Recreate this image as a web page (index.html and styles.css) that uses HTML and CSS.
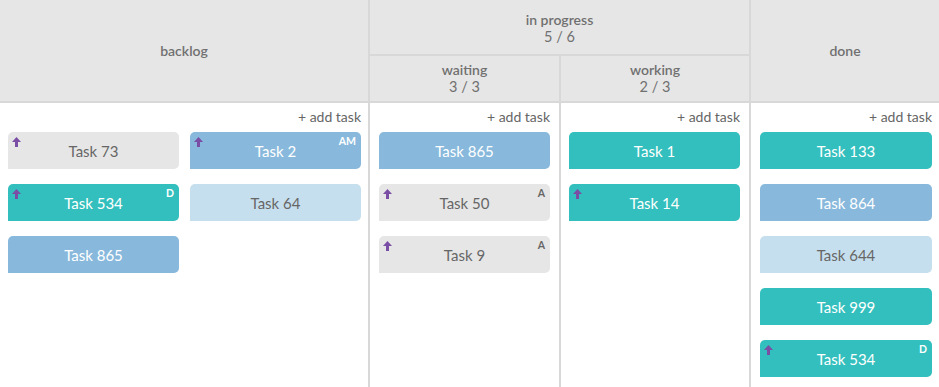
FILE: index.html
```html
<!DOCTYPE html>
<html lang="en">
<head>
  <meta charset="UTF-8">
  <title>Board</title>
  <link rel="stylesheet" href="styles.css">
</head>
<body>
  <div class="board">
    <!-- Header -->
    <div class="head head-backlog"><span class="title">backlog</span></div>
    <div class="head head-progress">
      <span class="title">in progress</span>
      <span class="count">5 / 6</span>
    </div>
    <div class="head head-waiting">
      <span class="title">waiting</span>
      <span class="count">3 / 3</span>
    </div>
    <div class="head head-working">
      <span class="title">working</span>
      <span class="count">2 / 3</span>
    </div>
    <div class="head head-done"><span class="title">done</span></div>

    <!-- Backlog -->
    <div class="col col-backlog">
      <div class="add">+ add task</div>
      <div class="cards two">
        <div class="card grey"><svg class="prio" viewBox="0 0 9 10"><path d="M4.5 0 L9 5 L6 5 L6 10 L3 10 L3 5 L0 5 Z"/></svg>Task 73</div>
        <div class="card blue"><svg class="prio" viewBox="0 0 9 10"><path d="M4.5 0 L9 5 L6 5 L6 10 L3 10 L3 5 L0 5 Z"/></svg>Task 2<span class="who">AM</span></div>
        <div class="card teal"><svg class="prio" viewBox="0 0 9 10"><path d="M4.5 0 L9 5 L6 5 L6 10 L3 10 L3 5 L0 5 Z"/></svg>Task 534<span class="who">D</span></div>
        <div class="card pale">Task 64</div>
        <div class="card blue">Task 865</div>
      </div>
    </div>

    <!-- Waiting -->
    <div class="col col-waiting">
      <div class="add">+ add task</div>
      <div class="cards">
        <div class="card blue">Task 865</div>
        <div class="card grey"><svg class="prio" viewBox="0 0 9 10"><path d="M4.5 0 L9 5 L6 5 L6 10 L3 10 L3 5 L0 5 Z"/></svg>Task 50<span class="who">A</span></div>
        <div class="card grey"><svg class="prio" viewBox="0 0 9 10"><path d="M4.5 0 L9 5 L6 5 L6 10 L3 10 L3 5 L0 5 Z"/></svg>Task 9<span class="who">A</span></div>
      </div>
    </div>

    <!-- Working -->
    <div class="col col-working">
      <div class="add">+ add task</div>
      <div class="cards">
        <div class="card teal">Task 1</div>
        <div class="card teal"><svg class="prio" viewBox="0 0 9 10"><path d="M4.5 0 L9 5 L6 5 L6 10 L3 10 L3 5 L0 5 Z"/></svg>Task 14</div>
      </div>
    </div>

    <!-- Done -->
    <div class="col col-done">
      <div class="add">+ add task</div>
      <div class="cards">
        <div class="card teal">Task 133</div>
        <div class="card blue">Task 864</div>
        <div class="card pale">Task 644</div>
        <div class="card teal">Task 999</div>
        <div class="card teal"><svg class="prio" viewBox="0 0 9 10"><path d="M4.5 0 L9 5 L6 5 L6 10 L3 10 L3 5 L0 5 Z"/></svg>Task 534<span class="who">D</span></div>
      </div>
    </div>
  </div>
</body>
</html>
```

FILE: styles.css
```css
/* General */
body {
  margin: 0;
  font-family: 'Lato', 'Open Sans', sans-serif;
  color: #666;
  background: #fff;
  overflow: hidden;
}

/* Board grid */
.board {
  display: grid;
  grid-template-columns: 370px 191px 190px 188px;
  grid-template-rows: 56px 47px 284px;
}

.head {
  background-color: #e6e6e6;
  display: flex;
  flex-direction: column;
  align-items: center;
  justify-content: center;
  box-sizing: border-box;
  border-bottom: 2px solid #d8d8d8;
  line-height: 17px;
}

.head .title {
  font-size: 14px;
  font-weight: 600;
  color: #707070;
}

.head .count {
  font-size: 14.5px;
  color: #707070;
}

.head-backlog {
  grid-column: 1;
  grid-row: 1 / 3;
  border-right: 2px solid #d8d8d8;
  padding-bottom: 1px;
}

.head-progress {
  grid-column: 2 / 4;
  grid-row: 1;
  border-right: 2px solid #d8d8d8;
  padding-top: 2px;
}

.head-waiting {
  grid-column: 2;
  grid-row: 2;
  border-right: 2px solid #d8d8d8;
  padding-bottom: 1px;
}

.head-working {
  grid-column: 3;
  grid-row: 2;
  border-right: 2px solid #d8d8d8;
  padding-bottom: 1px;
}

.head-done {
  grid-column: 4;
  grid-row: 1 / 3;
  padding-bottom: 1px;
}

/* Columns */
.col {
  box-sizing: border-box;
  border-right: 2px solid #d8d8d8;
  padding: 0 7px 0 8px;
}

.col-waiting {
  padding: 0 9px 0 9px;
}

.col-working {
  padding: 0 9px 0 8px;
}

.col-done {
  border-right: none;
  padding: 0 7px 0 9px;
}

.add {
  text-align: right;
  font-size: 14px;
  line-height: 20px;
  padding-top: 4px;
  margin-bottom: 5px;
  color: #666;
}

.cards {
  display: flex;
  flex-direction: column;
  gap: 15px;
}

.cards.two {
  display: grid;
  grid-template-columns: 171px 171px;
  column-gap: 11px;
  row-gap: 15px;
}

/* Cards */
.card {
  position: relative;
  height: 37px;
  line-height: 38px;
  text-align: center;
  font-size: 15px;
  border-radius: 5px 5px 5px 0;
}

.grey {
  background-color: #e6e6e6;
  color: #666;
}

.blue {
  background-color: #88b9dc;
  color: #fff;
}

.pale {
  background-color: #c6dfee;
  color: #666;
}

.teal {
  background-color: #33bfbd;
  color: #fff;
}

.prio {
  position: absolute;
  left: 4px;
  top: 5px;
  width: 9px;
  height: 10px;
  fill: #7b4ea5;
}

.who {
  position: absolute;
  right: 5px;
  top: 3px;
  font-size: 10.5px;
  font-weight: 700;
  line-height: 12px;
}
```
